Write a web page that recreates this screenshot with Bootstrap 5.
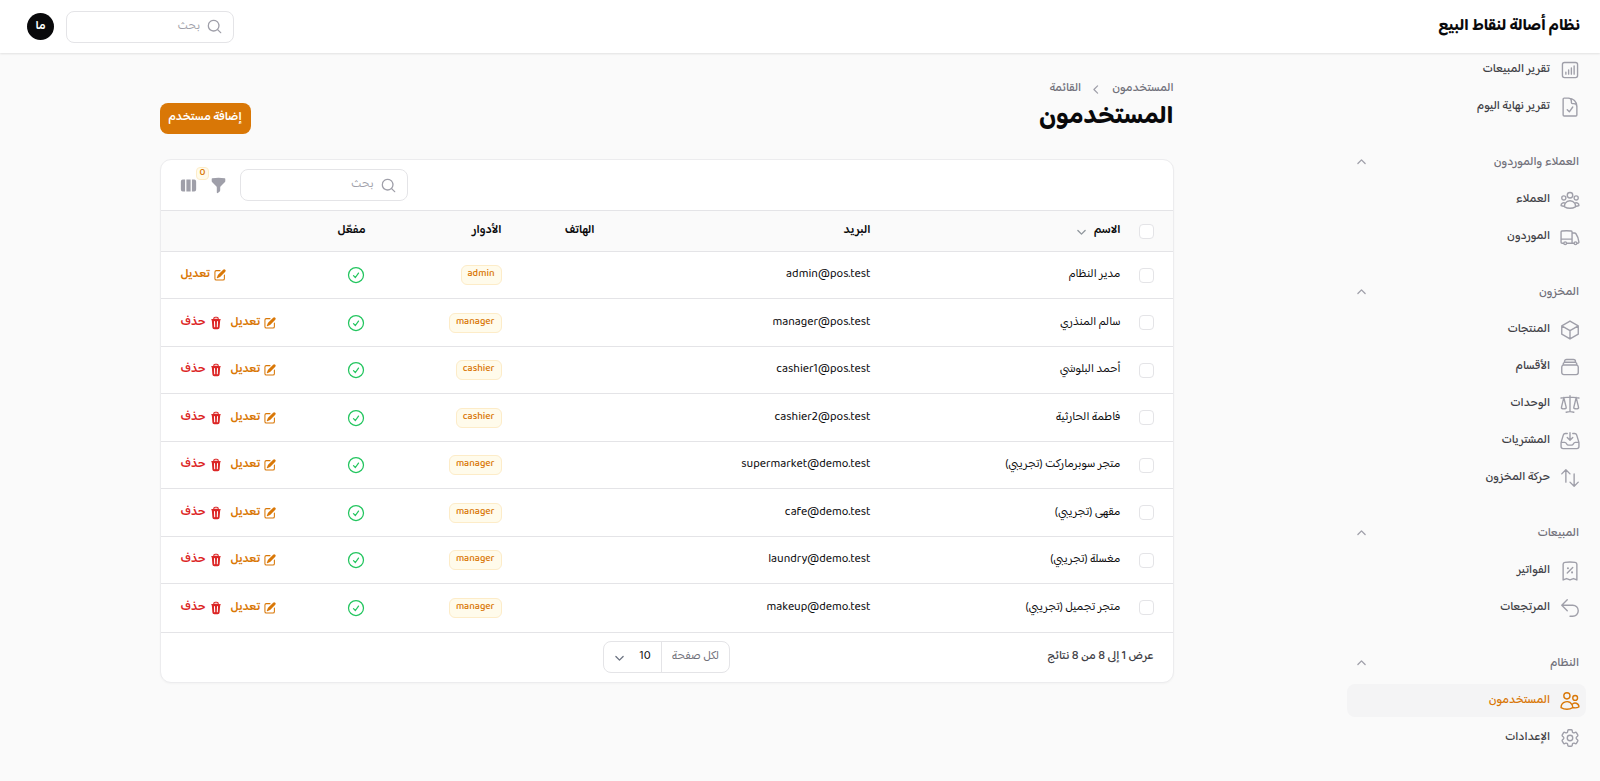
<!DOCTYPE html>
<html lang="ar" dir="rtl">
<head>
<meta charset="utf-8">
<meta name="viewport" content="width=device-width, initial-scale=1">
<title>المستخدمون - نظام أصالة لنقاط البيع</title>
<link rel="stylesheet" href="https://cdn.jsdelivr.net/npm/bootstrap@5.3.0/dist/css/bootstrap.min.css">
<style>
:root { --ink: #09090b; --ink-2: #3f3f46; --muted: #71717a; --faint: #9f9fa9; --line: #e4e4e7; --amber: #d97706; --page: #fafafa; }
body { font-family: "Baloo Bhaijaan 2", "Noto Sans Arabic", "Noto Sans", sans-serif; font-size: 12px; line-height: 18px; color: var(--ink); background: var(--page); }
a { color: inherit; text-decoration: none; }
.icon { width: 17px; height: 17px; fill: currentColor; fill-rule: evenodd; flex: none; display: block; }
.icon-line { fill: none; stroke: currentColor; stroke-width: 1.5; stroke-linecap: round; stroke-linejoin: round; width: 22px; height: 22px; }
.icon-sm { width: 14px; height: 14px; }
.icon-status { width: 20px; height: 20px; color: #22c55e; }

.topbar { height: 53px; background: #fff; box-shadow: 0 1px 2px rgba(0,0,0,.1); padding: 0 20px 0 27px; position: relative; z-index: 2; }
.brand { font-size: 16px; font-weight: 700; line-height: 22px; }
.avatar { width: 27px; height: 27px; border-radius: 50%; background: var(--ink); color: #fff; border: 0; padding: 0; line-height: 18px; }
.search { width: 168px; height: 32px; background: #fff; border: 1px solid var(--line); border-radius: 8px; padding: 0 10px; color: var(--faint); gap: 6px; }
.search input { border: 0; outline: 0; background: none; min-width: 0; padding: 0; color: var(--ink); }
.search input::placeholder { color: var(--faint); opacity: 1; }

.sidebar { width: 267px; flex: none; padding: 0 14px; gap: 23px; }
.side-head { border: 0; background: none; height: 33px; padding: 0 7px 0 6px; color: var(--muted); font-weight: 500; }
.side-head .icon { color: var(--faint); }
.side-link { height: 33px; padding: 0 5px; border-radius: 8px; color: var(--ink-2); font-weight: 500; gap: 9px; }
.side-link .icon { color: var(--faint); }
.side-link.current { background: #f4f4f5; color: var(--amber); }
.side-link.current .icon { color: var(--amber); }

.page { max-width: 1014px; }
.crumbs { color: var(--muted); font-weight: 500; margin: 27px 0 3px; gap: 7px; }
.crumbs .icon { color: var(--faint); }
.page-title { font-size: 25px; line-height: 33px; font-weight: 700; margin: 0; }
.btn-add { --bs-btn-bg: var(--amber); --bs-btn-color: #fff; --bs-btn-hover-bg: #b45309; --bs-btn-hover-color: #fff; --bs-btn-font-size: 12px; --bs-btn-line-height: 18px; --bs-btn-border-width: 0; --bs-btn-border-radius: 8px; font-weight: 600; height: 31px; padding: 6px 9px 7px; }

.panel { background: #fff; border: 1px solid #ececee; border-radius: 11px; overflow: hidden; margin-top: 25px; box-shadow: 0 1px 2px rgba(0,0,0,.03); }
.toolbar { height: 50px; padding: 0 19px; gap: 13px; }
.tool { border: 0; background: none; padding: 0; color: var(--faint); }
.count { position: absolute; bottom: 14px; left: -14px; }
.tag { display: inline-block; font-size: 10px; line-height: 13px; font-weight: 500; color: var(--amber); background: #fffbeb; border: 1px solid #fdecc8; border-radius: 6px; padding: 1px 6px 4px; }
.tag-count { font-size: 10px; line-height: 10px; padding: 0 3px 1px; border-radius: 4px; }

.users { table-layout: fixed; width: 100%; border-collapse: collapse; }
.users th, .users td { padding: 0 11px; text-align: start; vertical-align: middle; white-space: nowrap; border-top: 1px solid var(--line); }
.users thead th { height: 41px; background: var(--page); font-weight: 600; }
.users tbody td { height: 47px; }
.users tbody tr:nth-child(even) td { height: 48px; }
.users td.pick, .users th.pick { padding: 0 19px 0 0; }
.users .acts { padding-left: 20px; padding-right: 0; }
.c-pick { width: 41px; } .c-name { width: 250px; } .c-mail { width: 276px; } .c-phone { width: 93px; } .c-role { width: 136px; } .c-on { width: 80px; }
.form-check-input.box { width: 15px; height: 15px; margin: 0; float: none; border-color: var(--line); border-radius: 4px; display: block; }
.act { font-weight: 600; gap: 3px; color: var(--amber); }
.act-del { color: #dc2626; }

.foot { height: 50px; border-top: 1px solid var(--line); padding: 0 19px; display: grid; grid-template-columns: 1fr auto 1fr; align-items: center; color: var(--ink-2); font-weight: 500; }
.per { height: 32px; border: 1px solid var(--line); border-radius: 8px; overflow: hidden; font-weight: 400; }
.per label { color: var(--muted); border-left: 1px solid var(--line); padding: 6px 10px 0; align-self: stretch; }
.per .pick-size { position: relative; width: 57px; }
.per select { appearance: none; border: 0; background: none; width: 100%; height: 30px; padding: 0 10px 0 24px; color: var(--ink); }
.per .icon { position: absolute; left: 7px; top: 7px; color: #6b7280; pointer-events: none; }
</style>
</head>
<body>
<svg class="d-none" aria-hidden="true">
<symbol id="i-chart" viewBox="0 0 24 24"><path d="M7.5 14.25v2.25m3-4.5v4.5m3-6.75v6.75m3-9v9M6 20.25h12A2.25 2.25 0 0 0 20.25 18V6A2.25 2.25 0 0 0 18 3.75H6A2.25 2.25 0 0 0 3.75 6v12A2.25 2.25 0 0 0 6 20.25Z"/></symbol>
<symbol id="i-doc" viewBox="0 0 24 24"><path d="M10.125 2.25h-4.5c-.621 0-1.125.504-1.125 1.125v17.25c0 .621.504 1.125 1.125 1.125h12.75c.621 0 1.125-.504 1.125-1.125v-9M10.125 2.25h.375a9 9 0 0 1 9 9v.375M10.125 2.25A3.375 3.375 0 0 1 13.5 5.625v1.5c0 .621.504 1.125 1.125 1.125h1.5a3.375 3.375 0 0 1 3.375 3.375M9 15l2.25 2.25L15 12"/></symbol>
<symbol id="i-group" viewBox="0 0 24 24"><path d="M18 18.72a9.094 9.094 0 0 0 3.741-.479 3 3 0 0 0-4.682-2.72m.94 3.198.001.031c0 .225-.012.447-.037.666A11.944 11.944 0 0 1 12 21c-2.17 0-4.207-.576-5.963-1.584A6.062 6.062 0 0 1 6 18.719m12 0a5.971 5.971 0 0 0-.941-3.197m0 0A5.995 5.995 0 0 0 12 12.75a5.995 5.995 0 0 0-5.058 2.772m0 0a3 3 0 0 0-4.681 2.72 8.986 8.986 0 0 0 3.74.477m.94-3.197a5.971 5.971 0 0 0-.94 3.197M15 6.75a3 3 0 1 1-6 0 3 3 0 0 1 6 0Zm6 3a2.25 2.25 0 1 1-4.5 0 2.25 2.25 0 0 1 4.5 0Zm-13.5 0a2.25 2.25 0 1 1-4.5 0 2.25 2.25 0 0 1 4.5 0Z"/></symbol>
<symbol id="i-truck" viewBox="0 0 24 24"><path d="M8.25 18.75a1.5 1.5 0 0 1-3 0m3 0a1.5 1.5 0 0 0-3 0m3 0h6m-9 0H3.375a1.125 1.125 0 0 1-1.125-1.125V14.25m17.25 4.5a1.5 1.5 0 0 1-3 0m3 0a1.5 1.5 0 0 0-3 0m3 0h1.125c.621 0 1.129-.504 1.09-1.124a17.902 17.902 0 0 0-3.213-9.193 2.056 2.056 0 0 0-1.58-.86H14.25M16.5 18.75h-2.25m0-11.177v-.958c0-.568-.422-1.048-.987-1.106a48.554 48.554 0 0 0-10.026 0 1.106 1.106 0 0 0-.987 1.106v7.635m12-6.677v6.677m0 4.5v-4.5m0 0h-12"/></symbol>
<symbol id="i-cube" viewBox="0 0 24 24"><path d="m21 7.5-9-5.25L3 7.5m18 0-9 5.25m9-5.25v9l-9 5.25M3 7.5l9 5.25M3 7.5v9l9 5.25m0-9v9"/></symbol>
<symbol id="i-stack" viewBox="0 0 24 24"><path d="M6 6.878V6a2.25 2.25 0 0 1 2.25-2.25h7.5A2.25 2.25 0 0 1 18 6v.878m-12 0c.235-.083.487-.128.75-.128h10.5c.263 0 .515.045.75.128m-12 0A2.25 2.25 0 0 0 4.5 9v.878m13.5-3A2.25 2.25 0 0 1 19.5 9v.878m0 0a2.246 2.246 0 0 0-.75-.128H5.25c-.263 0-.515.045-.75.128m15 0A2.25 2.25 0 0 1 21 12v6a2.25 2.25 0 0 1-2.25 2.25H5.25A2.25 2.25 0 0 1 3 18v-6c0-.98.626-1.813 1.5-2.122"/></symbol>
<symbol id="i-scale" viewBox="0 0 24 24"><path d="M12 3v17.25m0 0c-1.472 0-2.882.265-4.185.75M12 20.25c1.472 0 2.882.265 4.185.75M18.75 4.97A48.416 48.416 0 0 0 12 4.5c-2.291 0-4.545.16-6.75.47m13.5 0c1.01.143 2.01.317 3 .52m-3-.52 2.62 10.726c.122.499-.106 1.028-.589 1.202a5.988 5.988 0 0 1-2.031.352 5.988 5.988 0 0 1-2.031-.352c-.483-.174-.711-.703-.59-1.202L18.75 4.971Zm-16.5.52c.99-.203 1.99-.377 3-.52m0 0 2.62 10.726c.122.499-.106 1.028-.589 1.202a5.989 5.989 0 0 1-2.031.352 5.989 5.989 0 0 1-2.031-.352c-.483-.174-.711-.703-.59-1.202L5.25 4.971Z"/></symbol>
<symbol id="i-inbox" viewBox="0 0 24 24"><path d="M9 3.75H6.912a2.25 2.25 0 0 0-2.15 1.588L2.35 13.177a2.25 2.25 0 0 0-.1.661V18a2.25 2.25 0 0 0 2.25 2.25h15A2.25 2.25 0 0 0 21.75 18v-4.162c0-.224-.034-.447-.1-.661L19.24 5.338a2.25 2.25 0 0 0-2.15-1.588H15M2.25 13.5h3.86a2.25 2.25 0 0 1 2.012 1.244l.256.512a2.25 2.25 0 0 0 2.013 1.244h3.218a2.25 2.25 0 0 0 2.013-1.244l.256-.512a2.25 2.25 0 0 1 2.013-1.244h3.859M12 3v8.25m0 0-3-3m3 3 3-3"/></symbol>
<symbol id="i-updown" viewBox="0 0 24 24"><path d="M3 7.5 7.5 3m0 0L12 7.5M7.5 3v13.5m13.5 0L16.5 21m0 0L12 16.5m4.5 4.5V7.5"/></symbol>
<symbol id="i-receipt" viewBox="0 0 24 24"><path d="m9 14.25 6-6m4.5-3.493V21.75l-3.75-1.5-3.75 1.5-3.75-1.5-3.75 1.5V4.757c0-1.108.806-2.057 1.907-2.185a48.507 48.507 0 0 1 11.186 0c1.1.128 1.907 1.077 1.907 2.185ZM9.75 9h.008v.008H9.75V9Zm.375 0a.375.375 0 1 1-.75 0 .375.375 0 0 1 .75 0Zm4.125 4.5h.008v.008h-.008V13.5Zm.375 0a.375.375 0 1 1-.75 0 .375.375 0 0 1 .75 0Z"/></symbol>
<symbol id="i-return" viewBox="0 0 24 24"><path d="M9 15 3 9m0 0 6-6M3 9h12a6 6 0 0 1 0 12h-3"/></symbol>
<symbol id="i-users" viewBox="0 0 24 24"><path d="M15 19.128a9.38 9.38 0 0 0 2.625.372 9.337 9.337 0 0 0 4.121-.952 4.125 4.125 0 0 0-7.533-2.493M15 19.128v-.003c0-1.113-.285-2.16-.786-3.07M15 19.128v.106A12.318 12.318 0 0 1 8.624 21c-2.331 0-4.512-.645-6.374-1.766l-.001-.109a6.375 6.375 0 0 1 11.964-3.07M12 6.375a3.375 3.375 0 1 1-6.75 0 3.375 3.375 0 0 1 6.75 0Zm8.25 2.25a2.625 2.625 0 1 1-5.25 0 2.625 2.625 0 0 1 5.25 0Z"/></symbol>
<symbol id="i-cog" viewBox="0 0 24 24"><path d="M9.594 3.94c.09-.542.56-.94 1.11-.94h2.593c.55 0 1.02.398 1.11.94l.213 1.281c.063.374.313.686.645.87.074.04.147.083.22.127.325.196.72.257 1.075.124l1.217-.456a1.125 1.125 0 0 1 1.37.49l1.296 2.247a1.125 1.125 0 0 1-.26 1.431l-1.003.827c-.293.241-.438.613-.43.992a7.723 7.723 0 0 1 0 .255c-.008.378.137.75.43.991l1.004.827c.424.35.534.955.26 1.43l-1.298 2.247a1.125 1.125 0 0 1-1.369.491l-1.217-.456c-.355-.133-.75-.072-1.076.124a6.47 6.47 0 0 1-.22.128c-.331.183-.581.495-.644.869l-.213 1.281c-.09.543-.56.94-1.11.94h-2.594c-.55 0-1.019-.398-1.11-.94l-.213-1.281c-.062-.374-.312-.686-.644-.87a6.52 6.52 0 0 1-.22-.127c-.325-.196-.72-.257-1.076-.124l-1.217.456a1.125 1.125 0 0 1-1.369-.49l-1.297-2.247a1.125 1.125 0 0 1 .26-1.431l1.004-.827c.292-.24.437-.613.43-.991a6.932 6.932 0 0 1 0-.255c.007-.38-.138-.751-.43-.992l-1.004-.827a1.125 1.125 0 0 1-.26-1.43l1.297-2.247a1.125 1.125 0 0 1 1.37-.491l1.216.456c.356.133.751.072 1.076-.124.072-.044.146-.086.22-.128.332-.183.582-.495.644-.869l.214-1.28Z M15 12a3 3 0 1 1-6 0 3 3 0 0 1 6 0Z"/></symbol>
<symbol id="i-check" viewBox="0 0 24 24"><path d="M9 12.75 11.25 15 15 9.75M21 12a9 9 0 1 1-18 0 9 9 0 0 1 18 0Z"/></symbol>
<symbol id="i-search" viewBox="0 0 20 20"><path d="M9 3.5a5.5 5.5 0 1 0 0 11 5.5 5.5 0 0 0 0-11ZM2 9a7 7 0 1 1 12.452 4.391l3.328 3.329a.75.75 0 1 1-1.06 1.06l-3.329-3.328A7 7 0 0 1 2 9Z"/></symbol>
<symbol id="i-edit" viewBox="0 0 20 20"><path d="m5.433 13.917 1.262-3.155A4 4 0 0 1 7.58 9.42l6.92-6.918a2.121 2.121 0 0 1 3 3l-6.92 6.918c-.383.383-.84.685-1.343.886l-3.154 1.262a.5.5 0 0 1-.65-.65Z"/><path d="M3.5 5.75c0-.69.56-1.25 1.25-1.25H10A.75.75 0 0 0 10 3H4.75A2.75 2.75 0 0 0 2 5.75v9.5A2.75 2.75 0 0 0 4.75 18h9.5A2.75 2.75 0 0 0 17 15.25V10a.75.75 0 0 0-1.5 0v5.25c0 .69-.56 1.25-1.25 1.25h-9.5c-.69 0-1.25-.56-1.25-1.25v-9.5Z"/></symbol>
<symbol id="i-trash" viewBox="0 0 20 20"><path d="M8.75 1A2.75 2.75 0 0 0 6 3.75v.443c-.795.077-1.584.176-2.365.298a.75.75 0 1 0 .23 1.482l.149-.022.841 10.518A2.75 2.75 0 0 0 7.596 19h4.807a2.75 2.75 0 0 0 2.742-2.53l.841-10.52.149.023a.75.75 0 0 0 .23-1.482A41.03 41.03 0 0 0 14 4.193V3.75A2.75 2.75 0 0 0 11.25 1h-2.5ZM10 4c.84 0 1.673.025 2.5.075V3.75c0-.69-.56-1.25-1.25-1.25h-2.5c-.69 0-1.25.56-1.25 1.25v.325C8.327 4.025 9.16 4 10 4ZM8.58 7.72a.75.75 0 0 0-1.5.06l.3 7.5a.75.75 0 1 0 1.5-.06l-.3-7.5Zm4.34.06a.75.75 0 1 0-1.5-.06l-.3 7.5a.75.75 0 1 0 1.5.06l.3-7.5Z"/></symbol>
<symbol id="i-funnel" viewBox="0 0 20 20"><path d="M2.628 1.601C5.028 1.206 7.49 1 10 1s4.973.206 7.372.601a.75.75 0 0 1 .628.74v2.288a2.25 2.25 0 0 1-.659 1.59l-4.682 4.683a2.25 2.25 0 0 0-.659 1.59v3.037c0 .684-.31 1.33-.844 1.757l-1.937 1.55A.75.75 0 0 1 8 18.25v-5.757a2.25 2.25 0 0 0-.659-1.591L2.659 6.22A2.25 2.25 0 0 1 2 4.629V2.34a.75.75 0 0 1 .628-.74Z"/></symbol>
<symbol id="i-columns" viewBox="0 0 20 20"><path d="M14 17h2.75A2.25 2.25 0 0 0 19 14.75v-9.5A2.25 2.25 0 0 0 16.75 3H14v14ZM12.5 3h-5v14h5V3ZM3.25 3H6v14H3.25A2.25 2.25 0 0 1 1 14.75v-9.5A2.25 2.25 0 0 1 3.25 3Z"/></symbol>
<symbol id="i-up" viewBox="0 0 20 20"><path d="M9.47 6.47a.75.75 0 0 1 1.06 0l4.25 4.25a.75.75 0 1 1-1.06 1.06L10 8.06l-3.72 3.72a.75.75 0 0 1-1.06-1.06l4.25-4.25Z"/></symbol>
<symbol id="i-down" viewBox="0 0 20 20"><path d="M5.22 8.22a.75.75 0 0 1 1.06 0L10 11.94l3.72-3.72a.75.75 0 1 1 1.06 1.06l-4.25 4.25a.75.75 0 0 1-1.06 0L5.22 9.28a.75.75 0 0 1 0-1.06Z"/></symbol>
<symbol id="i-left" viewBox="0 0 20 20"><path d="M11.78 5.22a.75.75 0 0 1 0 1.06L8.06 10l3.72 3.72a.75.75 0 1 1-1.06 1.06l-4.25-4.25a.75.75 0 0 1 0-1.06l4.25-4.25a.75.75 0 0 1 1.06 0Z"/></symbol>
</svg>

<header class="topbar d-flex align-items-center justify-content-between">
  <a class="brand" href="#">نظام أصالة لنقاط البيع</a>
  <div class="d-flex align-items-center gap-2">
    <label class="search d-flex align-items-center me-1"><svg class="icon"><use href="#i-search"/></svg><input class="flex-fill" type="search" placeholder="بحث" aria-label="بحث عام"></label>
    <button class="avatar ms-0 me-1 fw-semibold" type="button">ما</button>
  </div>
</header>

<div class="d-flex">
  <nav class="sidebar d-flex flex-column" aria-label="القائمة الرئيسية">
    <div class="d-flex flex-column gap-1">
      <a class="side-link d-flex align-items-center" href="#"><svg class="icon icon-line"><use href="#i-chart"/></svg><span>تقرير المبيعات</span></a>
      <a class="side-link d-flex align-items-center" href="#"><svg class="icon icon-line"><use href="#i-doc"/></svg><span>تقرير نهاية اليوم</span></a>
    </div>
    <div class="d-flex flex-column gap-1">
      <button class="side-head d-flex align-items-center justify-content-between" type="button"><span>العملاء والموردون</span><svg class="icon"><use href="#i-up"/></svg></button>
      <a class="side-link d-flex align-items-center" href="#"><svg class="icon icon-line"><use href="#i-group"/></svg><span>العملاء</span></a>
      <a class="side-link d-flex align-items-center" href="#"><svg class="icon icon-line"><use href="#i-truck"/></svg><span>الموردون</span></a>
    </div>
    <div class="d-flex flex-column gap-1">
      <button class="side-head d-flex align-items-center justify-content-between" type="button"><span>المخزون</span><svg class="icon"><use href="#i-up"/></svg></button>
      <a class="side-link d-flex align-items-center" href="#"><svg class="icon icon-line"><use href="#i-cube"/></svg><span>المنتجات</span></a>
      <a class="side-link d-flex align-items-center" href="#"><svg class="icon icon-line"><use href="#i-stack"/></svg><span>الأقسام</span></a>
      <a class="side-link d-flex align-items-center" href="#"><svg class="icon icon-line"><use href="#i-scale"/></svg><span>الوحدات</span></a>
      <a class="side-link d-flex align-items-center" href="#"><svg class="icon icon-line"><use href="#i-inbox"/></svg><span>المشتريات</span></a>
      <a class="side-link d-flex align-items-center" href="#"><svg class="icon icon-line"><use href="#i-updown"/></svg><span>حركة المخزون</span></a>
    </div>
    <div class="d-flex flex-column gap-1">
      <button class="side-head d-flex align-items-center justify-content-between" type="button"><span>المبيعات</span><svg class="icon"><use href="#i-up"/></svg></button>
      <a class="side-link d-flex align-items-center" href="#"><svg class="icon icon-line"><use href="#i-receipt"/></svg><span>الفواتير</span></a>
      <a class="side-link d-flex align-items-center" href="#"><svg class="icon icon-line"><use href="#i-return"/></svg><span>المرتجعات</span></a>
    </div>
    <div class="d-flex flex-column gap-1">
      <button class="side-head d-flex align-items-center justify-content-between" type="button"><span>النظام</span><svg class="icon"><use href="#i-up"/></svg></button>
      <a class="side-link current d-flex align-items-center" href="#" aria-current="page"><svg class="icon icon-line"><use href="#i-users"/></svg><span>المستخدمون</span></a>
      <a class="side-link d-flex align-items-center" href="#"><svg class="icon icon-line"><use href="#i-cog"/></svg><span>الإعدادات</span></a>
    </div>
  </nav>

  <main class="flex-fill">
    <div class="page mx-auto">
      <div class="d-flex justify-content-between align-items-end">
        <div>
          <nav class="crumbs d-flex align-items-center" aria-label="مسار التنقل"><a href="#">المستخدمون</a><svg class="icon"><use href="#i-left"/></svg><span>القائمة</span></nav>
          <h1 class="page-title">المستخدمون</h1>
        </div>
        <button class="btn btn-add" type="button">إضافة مستخدم</button>
      </div>

      <section class="panel">
        <div class="toolbar d-flex align-items-center justify-content-end">
          <label class="search d-flex align-items-center"><svg class="icon"><use href="#i-search"/></svg><input class="flex-fill" type="search" placeholder="بحث" aria-label="بحث في المستخدمين"></label>
          <button class="tool position-relative" type="button" aria-label="تصفية"><svg class="icon"><use href="#i-funnel"/></svg><span class="count tag tag-count">0</span></button>
          <button class="tool" type="button" aria-label="الأعمدة"><svg class="icon"><use href="#i-columns"/></svg></button>
        </div>
        <table class="users">
          <colgroup><col class="c-pick"><col class="c-name"><col class="c-mail"><col class="c-phone"><col class="c-role"><col class="c-on"><col></colgroup>
          <thead><tr>
            <th class="pick"><input class="form-check-input box" type="checkbox" aria-label="تحديد الكل"></th>
            <th><span class="d-flex align-items-center gap-1">الاسم<svg class="icon text-secondary opacity-75"><use href="#i-down"/></svg></span></th>
            <th>البريد</th><th>الهاتف</th><th>الأدوار</th><th>مفعّل</th><th></th>
          </tr></thead>
          <tbody id="rows"></tbody>
        </table>
        <div class="foot">
          <p class="m-0">عرض 1 إلى 8 من 8 نتائج</p>
          <div class="per d-flex align-items-center">
            <label for="size">لكل صفحة</label>
            <div class="pick-size"><select id="size"><option>5</option><option selected>10</option><option>25</option><option>50</option></select><svg class="icon"><use href="#i-down"/></svg></div>
          </div>
        </div>
      </section>
    </div>
  </main>
</div>

<script>
const users = [
  ['مدير النظام', 'admin@pos.test', 'admin'],
  ['سالم المنذري', 'manager@pos.test', 'manager'],
  ['أحمد البلوشي', 'cashier1@pos.test', 'cashier'],
  ['فاطمة الحارثية', 'cashier2@pos.test', 'cashier'],
  ['متجر سوبرماركت (تجريبي)', 'supermarket@demo.test', 'manager'],
  ['مقهى (تجريبي)', 'cafe@demo.test', 'manager'],
  ['مغسلة (تجريبي)', 'laundry@demo.test', 'manager'],
  ['متجر تجميل (تجريبي)', 'makeup@demo.test', 'manager']
];
const remove = '<a class="act act-del d-flex align-items-center" href="#"><svg class="icon icon-sm"><use href="#i-trash"/></svg><span>حذف</span></a>';
document.getElementById('rows').innerHTML = users.map(([name, mail, role]) => `<tr>
  <td class="pick"><input class="form-check-input box" type="checkbox" aria-label="تحديد ${name}"></td>
  <td>${name}</td><td>${mail}</td><td></td><td><span class="tag">${role}</span></td>
  <td><svg class="icon icon-line icon-status" role="img" aria-label="نعم"><use href="#i-check"/></svg></td>
  <td class="acts"><div class="d-flex justify-content-end gap-2"><a class="act d-flex align-items-center" href="#"><svg class="icon icon-sm"><use href="#i-edit"/></svg><span>تعديل</span></a>${role === 'admin' ? '' : remove}</div></td>
</tr>`).join('');
</script>
<script src="https://cdn.jsdelivr.net/npm/bootstrap@5.3.0/dist/js/bootstrap.bundle.min.js"></script>
</body>
</html>
